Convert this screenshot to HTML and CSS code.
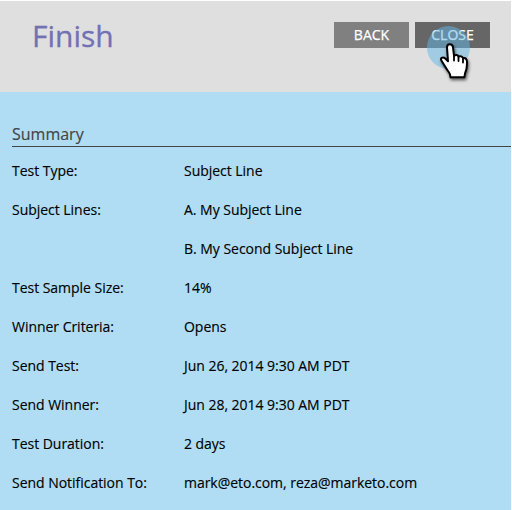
FILE: index.html
```html
<!DOCTYPE html>
<html lang="en">
<head>
<meta charset="utf-8">
<title>Finish</title>
<link rel="stylesheet" href="styles.css">
</head>
<body>
<main class="panel">
  <header class="header">
    <h1 class="title">Finish</h1>
    <div class="actions">
      <button class="button">BACK</button>
      <button class="button button-active">CLOSE</button>
    </div>
  </header>
  <section class="summary">
    <h2 class="summary-title">Summary</h2>
    <dl class="details">
      <dt>Test Type:</dt><dd>Subject Line</dd>
      <dt>Subject Lines:</dt><dd>A. My Subject Line</dd>
      <dt></dt><dd>B. My Second Subject Line</dd>
      <dt>Test Sample Size:</dt><dd>14%</dd>
      <dt>Winner Criteria:</dt><dd>Opens</dd>
      <dt>Send Test:</dt><dd>Jun 26, 2014 9:30 AM PDT</dd>
      <dt>Send Winner:</dt><dd>Jun 28, 2014 9:30 AM PDT</dd>
      <dt>Test Duration:</dt><dd>2 days</dd>
      <dt>Send Notification To:</dt><dd>mark@eto.com, reza@marketo.com</dd>
    </dl>
  </section>
  <svg class="cursor" width="60" height="65" viewBox="0 0 60 65">
    <circle cx="28.5" cy="27.5" r="21.5" fill="#63b8e5" fill-opacity=".5"/>
    <path class="hand" d="M27 27.500c0-4.300 5.500-4.300 6 0l1 8.300c1.500-1.500 4-1 4.500 1 1.500-1.200 4-.5 4.500 1.500 2-.8 4 .5 4 3.500 0 5-.2 8-1.800 11l-.8 4.500H30.500l-.5-3c-1-2.500-2.800-4-3.800-6l-4.700-7.500c-1.500-2.500 1-4.500 3.500-2.500l3 3z" fill="#fff" stroke="#000" stroke-width="2" stroke-linejoin="round"/>
    <path d="M34 35.500v5M38.500 37v4M43 38.500v4" fill="none" stroke="#000" stroke-width="1.800" stroke-linecap="round"/>
  </svg>
</main>
</body>
</html>
```
FILE: styles.css
```css
* { box-sizing: border-box; }
body { margin: 0; background: #fff; color: #000; font-family: "Open Sans", sans-serif; }
.panel { position: relative; width: 511px; height: 510px; overflow: hidden; background: #b0ddf4; }
.header { display: flex; justify-content: space-between; height: 92px; padding: 21px 21px 0 32px; border-top: 1px solid #fff; background: #dfdfdf; }
.title { margin: -8px 0 0; font-size: 30px; line-height: 43px; font-weight: 400; color: #7370b3; -webkit-text-stroke: 0.3px #7370b3; }
.actions { display: flex; gap: 6px; }
.button { width: 75px; height: 26px; padding: 0; border: 0; background: #808080; color: #fff; font: 14px/26px "Open Sans", sans-serif; -webkit-text-stroke: 0.25px #fff; }
.button-active { background: #666; }
.summary { padding: 31px 0 0 12px; }
.summary-title { height: 24px; margin: 0; border-bottom: 1px solid #444; font-size: 16px; line-height: 22px; font-weight: 400; color: #444; -webkit-text-stroke: 0.15px #444; }
.details { display: grid; grid-template-columns: 172px 1fr; grid-auto-rows: 39px; margin: 4px 0 0; font-size: 14px; letter-spacing: -0.03px; line-height: 39px; white-space: nowrap; -webkit-text-stroke: 0.15px #000; }
.details dd { margin: 0; }
.cursor { position: absolute; left: 420px; top: 20px; }
.hand { filter: drop-shadow(1px 2px 1.5px rgba(0, 0, 0, .6)); }
```
